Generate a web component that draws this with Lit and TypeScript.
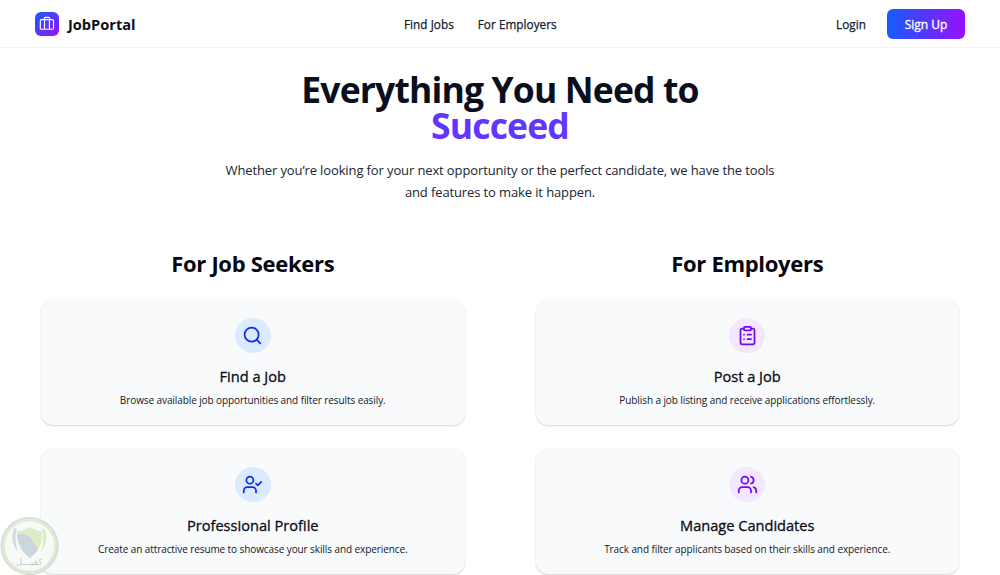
import { LitElement, html, css, svg } from 'lit';
import type { SVGTemplateResult } from 'lit';
import { customElement, property } from 'lit/decorators.js';
import { classMap } from 'lit/directives/class-map.js';

type Tone = 'blue' | 'purple';

interface Feature {
  icon: string;
  title: string;
  text: string;
}

const icons: Record<string, SVGTemplateResult> = {
  search: svg`<circle cx="11" cy="11" r="8" /><path d="m21 21-4.3-4.3" />`,
  clipboard: svg`
    <rect width="8" height="4" x="8" y="2" rx="1" ry="1" />
    <path d="M16 4h2a2 2 0 0 1 2 2v14a2 2 0 0 1-2 2H6a2 2 0 0 1-2-2V6a2 2 0 0 1 2-2h2" />
    <path d="M12 11h4M12 16h4M8 11h.01M8 16h.01" />
  `,
  userCheck: svg`
    <path d="m16 11 2 2 4-4" />
    <path d="M16 21v-2a4 4 0 0 0-4-4H6a4 4 0 0 0-4 4v2" />
    <circle cx="9" cy="7" r="4" />
  `,
  users: svg`
    <path d="M16 21v-2a4 4 0 0 0-4-4H6a4 4 0 0 0-4 4v2" />
    <circle cx="9" cy="7" r="4" />
    <path d="M22 21v-2a4 4 0 0 0-3-3.87M16 3.13a4 4 0 0 1 0 7.75" />
  `,
};

const seekerFeatures: Feature[] = [
  { icon: 'search', title: 'Find a Job', text: 'Browse available job opportunities and filter results easily.' },
  { icon: 'userCheck', title: 'Professional Profile', text: 'Create an attractive resume to showcase your skills and experience.' },
];

const employerFeatures: Feature[] = [
  { icon: 'clipboard', title: 'Post a Job', text: 'Publish a job listing and receive applications effortlessly.' },
  { icon: 'users', title: 'Manage Candidates', text: 'Track and filter applicants based on their skills and experience.' },
];

@customElement('site-header')
export class SiteHeader extends LitElement {
  static styles = css`
    :host {
      display: block;
    }

    .bar {
      display: grid;
      grid-template-columns: 369px auto 1fr;
      align-items: center;
      box-sizing: border-box;
      height: 48px;
      padding: 0 35px;
      border-bottom: 1px solid #f3f4f6;
      background: #ffffff;
    }

    .brand {
      display: flex;
      align-items: center;
      gap: 9px;
      font-size: 14.6px;
      font-weight: 700;
      color: #0b1020;
    }

    .logo {
      display: flex;
      align-items: center;
      justify-content: center;
      width: 24px;
      height: 24px;
      border-radius: 6px;
      background: linear-gradient(135deg, #155dfc, #9810fa);
    }

    .nav {
      display: flex;
      gap: 24px;
    }

    /* half-step weight between regular and semibold */
    .link {
      padding-top: 1px;
      font-size: 11.7px;
      letter-spacing: 0.06px;
      color: #111a2e;
      -webkit-text-stroke: 0.25px currentColor;
      text-decoration: none;
      white-space: nowrap;
    }

    .actions {
      display: flex;
      align-items: center;
      justify-content: flex-end;
      gap: 21px;
    }

    .signup {
      width: 78px;
      height: 30px;
      padding: 1px 0 0;
      border: 0;
      border-radius: 6px;
      background: linear-gradient(90deg, #155dfc, #9810fa);
      color: #ffffff;
      font-family: inherit;
      font-size: 12px;
      -webkit-text-stroke: 0.3px currentColor;
    }
  `;

  render() {
    return html`
      <header class="bar">
        <div class="brand">
          <span class="logo">
            <svg width="16" height="16" viewBox="0 0 16 16" fill="none" stroke="#ffffff" stroke-width="1.1" stroke-linejoin="round">
              <rect x="1.3" y="3.6" width="13.2" height="9.6" rx="1.2" />
              <path d="M5.3 3.6V2.4a1 1 0 0 1 1-1h3.4a1 1 0 0 1 1 1v1.2M5.5 3.6v9.6M10.4 3.6v9.6" />
            </svg>
          </span>
          <span class="name">JobPortal</span>
        </div>
        <nav class="nav">
          <a class="link">Find Jobs</a>
          <a class="link">For Employers</a>
        </nav>
        <div class="actions">
          <a class="link">Login</a>
          <button class="signup">Sign Up</button>
        </div>
      </header>
    `;
  }
}

@customElement('feature-card')
export class FeatureCard extends LitElement {
  @property({ type: Object }) feature!: Feature;
  @property() tone: Tone = 'blue';

  static styles = css`
    :host {
      display: block;
    }

    .card {
      display: flex;
      flex-direction: column;
      align-items: center;
      box-sizing: border-box;
      height: 125px;
      padding-top: 18px;
      border-radius: 12px;
      background: #f9fafb;
      box-shadow: 0 1px 2px rgba(0, 0, 0, 0.16), 0 0 1px rgba(0, 0, 0, 0.08);
      text-align: center;
    }

    .badge {
      display: flex;
      align-items: center;
      justify-content: center;
      width: 36px;
      height: 35px;
      border-radius: 50%;
    }

    .blue {
      background: #dbeafe;
      color: #0a30f5;
    }

    .purple {
      background: #f3e8ff;
      color: #7408f5;
    }

    .title {
      margin: 12px 0 0;
      font-size: 14.6px;
      line-height: 22px;
      font-weight: 400;
      color: #0a0d18;
      -webkit-text-stroke: 0.3px currentColor;
    }

    .text {
      margin: 5px 0 0;
      font-size: 10px;
      line-height: 16px;
      letter-spacing: -0.09px;
      color: #101828;
      white-space: nowrap;
    }
  `;

  render() {
    if (!this.feature) return html``;

    return html`
      <article class="card">
        <div class=${classMap({ badge: true, [this.tone]: true })}>
          <svg width="21" height="21" viewBox="0 0 24 24" fill="none" stroke="currentColor" stroke-width="2" stroke-linecap="round" stroke-linejoin="round">
            ${icons[this.feature.icon]}
          </svg>
        </div>
        <h3 class="title">${this.feature.title}</h3>
        <p class="text">${this.feature.text}</p>
      </article>
    `;
  }
}

@customElement('feature-column')
export class FeatureColumn extends LitElement {
  @property() heading = '';
  @property() tone: Tone = 'blue';
  @property({ type: Array }) features: Feature[] = [];

  static styles = css`
    :host {
      display: block;
    }

    .heading {
      margin: 0 0 22px;
      font-size: 22px;
      line-height: 30px;
      font-weight: 700;
      letter-spacing: -0.3px;
      text-align: center;
      color: #05070f;
    }

    .list {
      display: grid;
      gap: 24px;
    }
  `;

  render() {
    return html`
      <h2 class="heading">${this.heading}</h2>
      <div class="list">
        ${this.features.map(
          (feature) => html`<feature-card .feature=${feature} .tone=${this.tone}></feature-card>`
        )}
      </div>
    `;
  }
}

@customElement('shield-stamp')
export class ShieldStamp extends LitElement {
  static styles = css`
    :host {
      display: block;
    }

    .stamp {
      display: block;
    }

    .label {
      font-family: 'DejaVu Sans', sans-serif;
      font-size: 9px;
    }
  `;

  render() {
    return html`
      <svg class="stamp" width="60" height="60" viewBox="0 0 60 60">
        <circle cx="29.5" cy="30" r="28" fill="#f8fafa" stroke="#d5dde0" stroke-width="2.2" />
        <circle cx="29.5" cy="30" r="25.8" fill="none" stroke="#dfedcd" stroke-width="2.4" />
        <path d="M14.5 12C10.5 20 12 29 18 35.5 15 27 14.7 19 17 13.5Z" fill="#cfdadd" />
        <path d="M44 12C48 20 46.5 29 41 35.5 44 27 44.2 19 42 13.5Z" fill="#d9eabf" />
        <path d="M17 15.5Q24 15 30 11 36 15 42 15.5 43.5 32 30 42 16 32 17 15.5Z" fill="#dcecc4" />
        <path d="M17 18.5C25 16.5 30 20.5 33 26 36 30.5 38 32 37.5 34Q34.5 38.5 30 42 17.5 33 17 18.5Z" fill="#cbd7dc" />
        <text class="label" x="29" y="49" text-anchor="middle" fill="#c3cccf" textLength="27">كفيـــل</text>
      </svg>
    `;
  }
}

@customElement('app-root')
export class AppRoot extends LitElement {
  static styles = css`
    :host {
      display: block;
      position: relative;
      height: 575px;
      overflow: hidden;
      background: #ffffff;
      font-family: 'Open Sans', 'Noto Sans', sans-serif;
    }

    .hero {
      padding-top: 23px;
      text-align: center;
    }

    .headline {
      margin: 0;
      font-size: 35.5px;
      line-height: 36px;
      font-weight: 700;
      letter-spacing: -0.85px;
      color: #0a0f1e;
    }

    .accent {
      display: block;
      color: #6236ff;
    }

    .lead {
      margin: 16px 0 0;
      font-size: 13px;
      line-height: 22px;
      letter-spacing: -0.12px;
      color: #1b2433;
    }

    .line {
      display: block;
    }

    .columns {
      display: grid;
      grid-template-columns: 1fr 1fr;
      gap: 71px;
      padding: 45px 41px 0;
    }

    .stamp {
      position: absolute;
      left: 0;
      bottom: -1px;
    }
  `;

  render() {
    return html`
      <site-header></site-header>
      <main>
        <section class="hero">
          <h1 class="headline">Everything You Need to <span class="accent">Succeed</span></h1>
          <p class="lead">
            <span class="line">Whether you’re looking for your next opportunity or the perfect candidate, we have the tools</span>
            <span class="line">and features to make it happen.</span>
          </p>
        </section>
        <section class="columns">
          <feature-column heading="For Job Seekers" tone="blue" .features=${seekerFeatures}></feature-column>
          <feature-column heading="For Employers" tone="purple" .features=${employerFeatures}></feature-column>
        </section>
      </main>
      <shield-stamp class="stamp"></shield-stamp>
    `;
  }
}
